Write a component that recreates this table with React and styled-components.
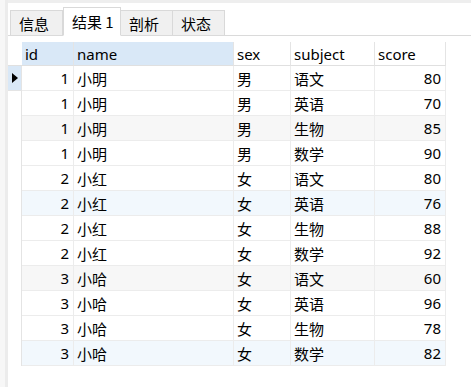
import styled, { createGlobalStyle } from "styled-components";

const GlobalStyle = createGlobalStyle`
  html, body {
    margin: 0;
    padding: 0;
    background: #ffffff;
  }
  body {
    font-family: "Noto Sans", "Noto Sans CJK SC", sans-serif;
    font-size: 15px;
    color: #000;
  }
`

const columns = [
  { key: 'id', label: 'id', width: 52, align: 'right', active: true },
  { key: 'name', label: 'name', width: 160, align: 'left', active: true },
  { key: 'sex', label: 'sex', width: 57, align: 'left' },
  { key: 'subject', label: 'subject', width: 84, align: 'left' },
  { key: 'score', label: 'score', width: 71, align: 'right' },
]

const rows = [
  [1, '小明', '男', '语文', 80],
  [1, '小明', '男', '英语', 70],
  [1, '小明', '男', '生物', 85],
  [1, '小明', '男', '数学', 90],
  [2, '小红', '女', '语文', 80],
  [2, '小红', '女', '英语', 76],
  [2, '小红', '女', '生物', 88],
  [2, '小红', '女', '数学', 92],
  [3, '小哈', '女', '语文', 60],
  [3, '小哈', '女', '英语', 96],
  [3, '小哈', '女', '生物', 78],
  [3, '小哈', '女', '数学', 82],
]

const tabs = ['信息', '结果 1', '剖析', '状态']

const Page = styled.div`
  display: flex;
  width: 471px;
  height: 387px;
  overflow: hidden;
`

const LeftStrip = styled.div`
  width: 8px;
  flex: none;
  background: linear-gradient(to right, #f7f7f7 0 5px, #ececec 5px 8px);
`

const Main = styled.div`
  flex: 1;
  display: flex;
  flex-direction: column;
`

const TopStrip = styled.div`
  height: 3px;
  background: #eeeeee;
`

const TabBar = styled.div`
  display: flex;
  align-items: flex-end;
  height: 32px;
  padding-left: 2px;
  border-bottom: 1px solid #dadada;
`

const Tab = styled.div`
  box-sizing: border-box;
  height: ${({ active }) => active ? '29px' : '25px'};
  margin-bottom: ${({ active }) => active ? '-1px' : '0'};
  padding: 0 0 0 8px;
  display: flex;
  align-items: center;
  white-space: nowrap;
  font-family: "Noto Sans CJK SC", sans-serif;
  font-size: 15px;
  background: ${({ active }) => active ? '#ffffff' : '#f0f0f0'};
  border: 1px solid #d9d9d9;
  border-bottom: ${({ active }) => active ? '1px solid #ffffff' : 'none'};
  border-left: ${({ first, active }) => first || active ? '1px solid #d9d9d9' : 'none'};
  width: ${({ w }) => w}px;
`

const Grid = styled.div`
  display: grid;
  grid-template-columns: 14px ${columns.map(c => c.width + 'px').join(' ')};
  margin-top: 6px;
  width: max-content;
`

const HeadCell = styled.div`
  box-sizing: border-box;
  height: 24px;
  padding: 0 3px;
  display: flex;
  align-items: center;
  font-size: 15px;
  background: ${({ active }) => active ? '#d9e8f7' : '#ffffff'};
  border-right: ${({ corner }) => corner ? 'none' : '1px solid #e4e4e4'};
  border-bottom: 1px solid #e0e0e0;
`

const Indicator = styled.div`
  box-sizing: border-box;
  height: 25px;
  display: flex;
  align-items: center;
  justify-content: center;
  background: ${({ current }) => current ? '#d9e8f7' : '#ffffff'};
  border-right: 1px solid #e4e4e4;
  border-bottom: ${({ current }) => current ? '1px solid #e4e4e4' : 'none'};
`

const Arrow = styled.span`
  width: 0;
  height: 0;
  border-top: 5px solid transparent;
  border-bottom: 5px solid transparent;
  border-left: 6px solid #000;
  margin-left: 1px;
`

const Cell = styled.div`
  box-sizing: border-box;
  height: 25px;
  padding: 0 4px 0 3px;
  display: flex;
  align-items: center;
  justify-content: ${({ align }) => align === 'right' ? 'flex-end' : 'flex-start'};
  font-family: "Noto Sans", "Noto Sans CJK SC", sans-serif;
  font-size: 15px;
  background: ${({ tone }) => tone === 'gray' ? '#f7f7f7' : tone === 'blue' ? '#f2f8fd' : '#ffffff'};
  border-right: 1px solid #ececec;
  border-bottom: 1px solid #ececec;
`

const toneFor = (i) => {
  if (i === 2 || i === 8) return 'gray'
  if (i === 5 || i === 11) return 'blue'
  return 'white'
}

const tabWidths = [53, 58, 52, 52]

export default function App() {
  return (
    <>
      <GlobalStyle />
      <Page>
        <LeftStrip />
        <Main>
          <TopStrip />
          <TabBar>
            {tabs.map((t, i) => (
              <Tab key={t} active={i === 1} first={i === 0} w={tabWidths[i]}>{t}</Tab>
            ))}
          </TabBar>
          <Grid>
            <HeadCell corner />
            {columns.map(c => (
              <HeadCell key={c.key} active={c.active}>{c.label}</HeadCell>
            ))}
            {rows.map((r, i) => (
              <Row key={i} row={r} index={i} />
            ))}
          </Grid>
        </Main>
      </Page>
    </>
  );
}

const Row = ({ row, index }) => (
  <>
    <Indicator current={index === 0}>{index === 0 && <Arrow />}</Indicator>
    {row.map((v, j) => (
      <Cell key={j} align={columns[j].align} tone={toneFor(index)}>{v}</Cell>
    ))}
  </>
)
